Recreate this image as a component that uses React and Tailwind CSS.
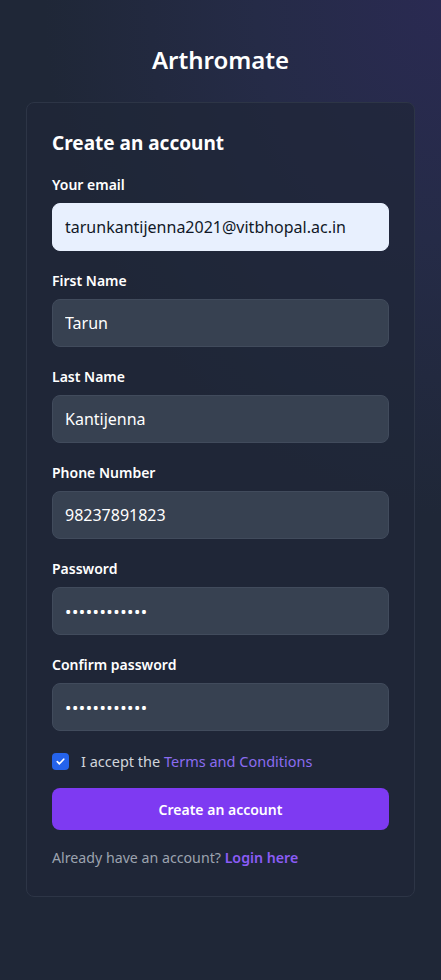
import React from 'react';

const fields = [
  { label: 'First Name', value: 'Tarun' },
  { label: 'Last Name', value: 'Kantijenna' },
  { label: 'Phone Number', value: '98237891823' },
  { label: 'Password', value: 'password1234', type: 'password' },
  { label: 'Confirm password', value: 'password1234', type: 'password' },
];

const Field = ({ label, value, type = 'text', light }) => (
  <div>
    <label className="block mb-2 text-[14px] leading-5 font-semibold text-white">{label}</label>
    <input
      readOnly
      type={type}
      value={value}
      className={
        light
          ? 'block w-full h-12 px-3 rounded-lg bg-[#e8f0fe] text-[#111827] text-[16px] outline-none border border-[#e8f0fe]'
          : type === 'password'
          ? 'block w-full h-12 px-3 rounded-lg bg-[#374151] text-white text-[17px] tracking-[0.5px] outline-none border border-[#414b5c]'
          : 'block w-full h-12 px-3 rounded-lg bg-[#374151] text-white text-[16px] outline-none border border-[#414b5c]'
      }
    />
  </div>
);

export default function App() {
  return (
    <div
      className="min-h-[980px] w-full bg-[#1f2737] bg-[radial-gradient(ellipse_120%_70%_at_top_right,#2a2a52_0%,#252b47_35%,#1f2737_75%)] px-[26px] pt-[44px] font-['Noto_Sans',sans-serif]"
    >
      <h1 className="text-center text-[24px] leading-8 font-semibold text-white mb-[26px]">Arthromate</h1>

      <div className="rounded-lg border border-[#2d3546] bg-[#1f2737]/70 px-[25px] pt-[24px] pb-[28px]">
        <h2 className="text-[19px] leading-8 font-bold text-white mb-[16px]">Create an account</h2>

        <div className="flex flex-col gap-[20px]">
          <Field label="Your email" value="tarunkantijenna2021@vitbhopal.ac.in" light />
          {fields.map((f) => (
            <Field key={f.label} {...f} />
          ))}
        </div>

        <div className="flex items-center gap-3 mt-[20px]">
          <div className="w-[17px] h-[17px] rounded-[4px] bg-[#2563eb] flex items-center justify-center">
            <svg width="11" height="11" viewBox="0 0 12 12" fill="none">
              <path d="M2.5 6.2l2.3 2.3 4.7-5" stroke="white" strokeWidth="1.8" strokeLinecap="round" strokeLinejoin="round" />
            </svg>
          </div>
          <span className="text-[14.5px] leading-5 text-[#d1d5db]">
            I accept the <span className="text-[#8b6cf0]">Terms and Conditions</span>
          </span>
        </div>

        <button className="mt-[17px] w-full h-[42px] rounded-lg bg-[#7e3af2] text-white text-[14px] font-semibold">
          Create an account
        </button>

        <p className="mt-[17px] text-[14.2px] text-[#9ca3af]">
          Already have an account? <span className="font-semibold text-[#8b5cf6]">Login here</span>
        </p>
      </div>
    </div>
  );
}
